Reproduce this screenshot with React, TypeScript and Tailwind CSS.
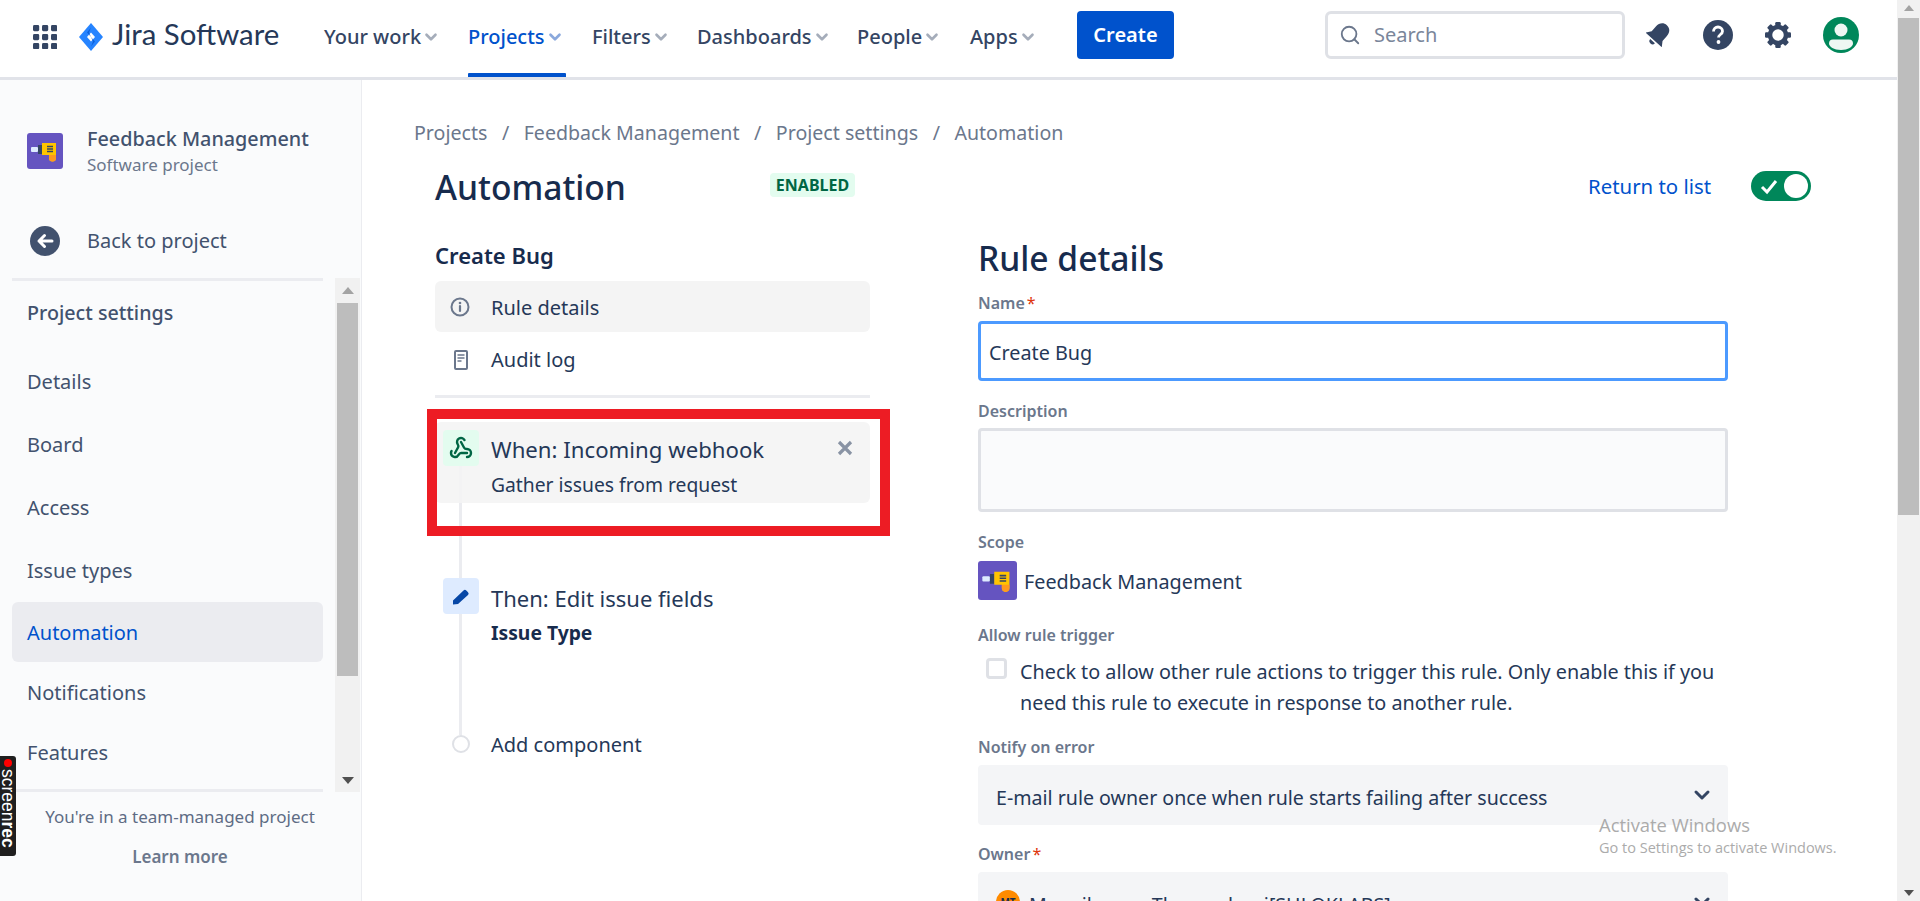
import React from 'react';
import { ChevronDown, Search, Webhook } from 'lucide-react';

const navItems = [
  { label: 'Your work', width: 'w-[144px]' },
  { label: 'Projects', width: 'w-[124px]', active: true },
  { label: 'Filters', width: 'w-[105px]' },
  { label: 'Dashboards', width: 'w-[160px]' },
  { label: 'People', width: 'w-[113px]' },
  { label: 'Apps', width: 'w-[107px]' },
];

const settingsLinks = ['Details', 'Board', 'Access', 'Issue types', 'Automation', 'Notifications', 'Features'];

const DrillIcon = ({ size }: { size: number }) => (
  <svg width={size} height={size} viewBox="0 0 36 36" className="shrink-0 rounded-[3px]">
    <rect width="36" height="36" fill="#6554c0" />
    <rect x="4" y="14" width="7" height="5" rx="1" fill="#deebff" />
    <rect x="11" y="12" width="4" height="9" fill="#344563" />
    <path d="M15 10h14v15a3.5 3.5 0 0 1-7 0v-3h-7z" fill="#ffc400" />
    <path d="M22 22h7v3a3.5 3.5 0 0 1-7 0z" fill="#ff991f" />
    <path d="M20 13.5h6M20 16h6M20 18.5h6" stroke="#344563" strokeWidth="1.4" />
  </svg>
);

const Field = ({ label, required, className, children }: { label: string; required?: boolean; className: string; children: React.ReactNode }) => (
  <div className={className}>
    <div className="h-[22px] text-[16px] leading-[22px] font-semibold text-[#6b778c]">
      {label}
      {required && <span className="ml-[2px] font-normal text-[#de350b]">*</span>}
    </div>
    {children}
  </div>
);

export default function App() {
  return (
    <div className="relative flex h-[901px] w-full overflow-hidden bg-white font-['Noto_Sans',sans-serif] text-[#172b4d]">
      <div className="flex min-w-0 flex-1 flex-col">
        {/* Top nav */}
        <header className="flex h-[80px] shrink-0 items-start border-b-[3px] border-[#e1e3e9] bg-white">
          <div className="flex h-[73px] items-center pl-[33px]">
            <svg width="24" height="24" viewBox="0 0 24 24" fill="#344563" className="mr-[21px]">
              {[0, 9, 18].map(y => [0, 9, 18].map(x => <rect key={`${x}-${y}`} x={x} y={y} width="6.2" height="6.2" rx="1.4" />))}
            </svg>
            <svg width="26" height="30" viewBox="0 0 26 30" className="mr-[8px]">
              <path d="M13 1 25 15 13 29 1 15z" fill="#2684ff" />
              <path d="M13 10.5 17 15l-4 4.5L9 15z" fill="#fff" />
              <path d="M13 5.5 9 10.5l4 4.5-2-4.5zM13 24.5l4-5-4-4.5 2 4.5z" fill="#0052cc" opacity="0.7" />
            </svg>
            <span className="-mt-[4px] w-[212px] font-['Lato',sans-serif] text-[29.400px] text-[#253858]">Jira Software</span>
          </div>
          <nav className="flex h-[77px]">
            {navItems.map(item => (
              <div key={item.label} className={`${item.width} relative flex h-full items-center pb-[4px] text-[20px] font-medium ${item.active ? 'text-[#0052cc]' : 'text-[#344563]'}`}>
                {item.label}
                <ChevronDown size={18} strokeWidth={3.5} className={`ml-[1px] ${item.active ? 'text-[#8aa8dc]' : 'text-[#a5adba]'}`} />
                {item.active && <div className="absolute bottom-0 left-0 h-[4px] w-[98px] rounded-t-[1px] bg-[#0052cc]" />}
              </div>
            ))}
          </nav>
          <button className="mt-[11px] h-[48px] w-[97px] rounded-[4px] bg-[#0052cc] text-[20px] font-semibold text-white">Create</button>
          <div className="ml-auto mt-[11px] flex h-[48px] w-[300px] items-center rounded-[6px] border-[3px] border-[#dfe1e6] pl-[11px]">
            <Search size={22} strokeWidth={2} className="text-[#6b778c]" />
            <span className="ml-[13px] text-[20px] text-[#7a869a]">Search</span>
          </div>
          <div className="flex h-[69px] items-center pl-[21px] pr-[38px]">
            <svg width="25" height="25" viewBox="0 0 24 24" fill="#344563" className="mr-[32px]">
              <g transform="rotate(42 12 12)">
                <path d="M12 0c4.500 0 7 3.500 7 8v6l3.500 5h-21L5 14V8c0-4.500 2.500-8 7-8z" />
                <path d="M9 20.500a3 3 0 0 0 6 0z" />
              </g>
            </svg>
            <svg width="30" height="30" viewBox="0 0 30 30" className="mr-[32px]">
              <circle cx="15" cy="15" r="15" fill="#344563" />
              <path d="M10.500 11.500c0-2.800 2-4.500 4.500-4.500s4.500 1.700 4.500 4.200c0 3.300-4 3.300-4 6.300" fill="none" stroke="#fff" strokeWidth="2.800" />
              <circle cx="15.500" cy="22" r="1.900" fill="#fff" />
            </svg>
            <svg width="26" height="26" viewBox="0 0 26 26" className="mr-[32px]">
              {[0, 45, 90, 135, 180, 225, 270, 315].map(a => (
                <rect key={a} x="10.250" y="0" width="5.500" height="6" rx="1.200" fill="#344563" transform={`rotate(${a} 13 13)`} />
              ))}
              <circle cx="13" cy="13" r="8" fill="none" stroke="#344563" strokeWidth="4.500" />
            </svg>
            <svg width="36" height="36" viewBox="0 0 36 36">
              <circle cx="18" cy="18" r="18" fill="#00875a" />
              <circle cx="18" cy="13" r="6.500" fill="#eef7f3" />
              <path d="M6 26.500a4 4 0 0 1 4-4h16a4 4 0 0 1 4 4c0 3-5 6.500-12 6.500S6 29.500 6 26.500z" fill="#eef7f3" />
            </svg>
          </div>
        </header>

        <div className="flex min-h-0 flex-1">
          {/* Project sidebar */}
          <aside className="flex w-[362px] shrink-0 flex-col border-r border-[#ebecf0] bg-[#fafbfc] text-[#42526e]">
            <div className="flex h-[198px] flex-col">
              <div className="flex items-center pl-[27px] pt-[45px]">
                <DrillIcon size={36} />
                <div className="ml-[24px]">
                  <div className="text-[19.800px] leading-[28px] font-medium text-[#42526e]">Feedback Management</div>
                  <div className="text-[17px] leading-[24px] text-[#6b778c]">Software project</div>
                </div>
              </div>
              <div className="mt-[48px] flex items-center pl-[30px]">
                <svg width="30" height="30" viewBox="0 0 30 30">
                  <circle cx="15" cy="15" r="15" fill="#42526e" />
                  <path d="M22 15H9M14.500 9.500 9 15l5.500 5.500" fill="none" stroke="#fff" strokeWidth="3" strokeLinecap="round" strokeLinejoin="round" />
                </svg>
                <span className="ml-[27px] pt-[1px] text-[20px]">Back to project</span>
              </div>
            </div>
            <div className="flex h-[514px] shrink-0">
              <div className="ml-[12px] flex w-[311px] flex-col border-y-[3px] border-[#ebecf0]">
                <div className="flex h-[62px] shrink-0 items-center pl-[15px] pt-[1px] text-[19.700px] font-medium">Project settings</div>
                <div className="mt-[6px] flex flex-col">
                  {settingsLinks.map((link, i) => (
                    <div
                      key={link}
                      className={`flex shrink-0 items-center pl-[15px] pt-[2px] text-[20px] ${i < 4 ? 'h-[63px]' : 'h-[60px]'} ${
                        link === 'Automation' ? 'mt-[1px] rounded-[6px] bg-[#ebecf0] text-[#0052cc]' : 'text-[#42526e]'
                      }`}
                    >
                      {link}
                    </div>
                  ))}
                </div>
              </div>
              <div className="ml-[12px] flex h-full w-[25px] flex-col items-center bg-[#f1f1f1]">
                <div className="mt-[9px] h-0 w-0 border-x-[6px] border-b-[7px] border-x-transparent border-b-[#a3a3a3]" />
                <div className="mt-[9px] h-[373px] w-[21px] bg-[#bdbdbd]" />
                <div className="mt-[101px] h-0 w-0 border-x-[6px] border-t-[7px] border-x-transparent border-t-[#505050]" />
              </div>
            </div>
            <div className="ml-[12px] w-[336px] pt-[11px] text-center text-[#5e6c84]">
              <div className="text-[17px] leading-[28px]">You're in a team-managed project</div>
              <div className="mt-[13px] text-[17px] leading-[26px] font-semibold text-[#6b778c]">Learn more</div>
            </div>
          </aside>

          {/* Rule editor */}
          <main className="relative min-w-0 flex-1 overflow-hidden">
            <div className="mt-[38px] flex h-[30px] items-center gap-[14.500px] pl-[52px] text-[19.600px] text-[#6b778c]">
              <span>Projects</span><span>/</span>
              <span>Feedback Management</span><span>/</span>
              <span>Project settings</span><span>/</span>
              <span>Automation</span>
            </div>
            <div className="mt-[13px] flex h-[54px] items-center pl-[73px]">
              <h1 className="-mt-[2px] w-[335px] text-[33.600px] font-medium leading-[54px]">Automation</h1>
              <span className="-mt-[6px] flex h-[24px] w-[85px] items-center justify-center rounded-[4px] bg-[#e3fcef] text-[16px] font-bold text-[#006644]">ENABLED</span>
              <a className="ml-[733px] -mt-[3px] text-[20.400px] text-[#0052cc]">Return to list</a>
              <div className="ml-[40px] -mt-[5px] flex h-[30px] w-[60px] items-center justify-between rounded-full bg-[#00875a] px-[3px]">
                <svg width="24" height="24" viewBox="0 0 24 24" fill="none" stroke="#fff" strokeWidth="3" className="ml-[3px]"><path d="M5 13l5 5 9-11" /></svg>
                <div className="h-[24px] w-[24px] rounded-full bg-white" />
              </div>
            </div>

            <div className="flex pl-[73px]">
              {/* Left rail */}
              <div className="w-[435px] shrink-0">
                <div className="mt-[24px] h-[33px] text-[22px] font-semibold leading-[33px]">Create Bug</div>
                <div className="mt-[9px] flex h-[51px] items-center rounded-[6px] bg-[#f4f4f4] pl-[15px] text-[20px]">
                  <svg width="20" height="20" viewBox="0 0 20 20" fill="none" className="shrink-0">
                    <circle cx="10" cy="10" r="8.500" stroke="#6b778c" strokeWidth="2" />
                    <path d="M10 9v5" stroke="#6b778c" strokeWidth="2.200" strokeLinecap="round" />
                    <circle cx="10" cy="6" r="1.300" fill="#6b778c" />
                  </svg>
                  <span className="ml-[21px] pt-[3px] text-[#253858]">Rule details</span>
                </div>
                <div className="mt-[3px] flex h-[50px] items-center pl-[19px] text-[20px]">
                  <svg width="14" height="20" viewBox="0 0 14 20" fill="none" className="shrink-0">
                    <rect x="1" y="1" width="12" height="18" rx="1" stroke="#6b778c" strokeWidth="2" />
                    <path d="M3.500 5h7M3.500 8h7M3.500 11h4" stroke="#6b778c" strokeWidth="1.500" />
                  </svg>
                  <span className="ml-[23px] text-[#253858]">Audit log</span>
                </div>
                <div className="mt-[10px] h-[3px] bg-[#ebecf0]" />

                <div className="relative mt-[24px]">
                  <div className="absolute left-[24px] top-[8px] h-[305px] w-[3px] bg-[#ebecf0]" />
                  <div className="relative flex h-[81px] rounded-[6px] bg-[#f4f4f4]/90 pl-[8px] pt-[8px]">
                    <div className="flex h-[36px] w-[36px] shrink-0 items-center justify-center rounded-[4px] bg-[#e3fcef]">
                      <Webhook size={24} strokeWidth={2.4} className="text-[#006644]" />
                    </div>
                    <div className="ml-[12px]">
                      <div className="pt-[3px] text-[22.200px] leading-[34px] text-[#253858]">When: Incoming webhook</div>
                      <div className="pt-[4px] text-[19.300px] leading-[27px] text-[#253858]">Gather issues from request</div>
                    </div>
                    <svg width="16" height="16" viewBox="0 0 16 16" stroke="#8993a4" strokeWidth="3.200" className="ml-auto mr-[17px] mt-[10px]">
                      <path d="M2 2l12 12M14 2 2 14" />
                    </svg>
                  </div>
                  <div className="relative mt-[75px] flex h-[151px] pl-[8px]">
                    <div className="flex h-[36px] w-[36px] shrink-0 items-center justify-center rounded-[4px] bg-[#deebff]">
                      <svg width="18" height="18" viewBox="0 0 18 18" fill="#0747a6">
                        <path d="M1 13.500 11.500 3.500a2 2 0 0 1 2.800 0l1.700 1.700a2 2 0 0 1 0 2.800L6 17l-5 0.500z" />
                      </svg>
                    </div>
                    <div className="ml-[12px]">
                      <div className="pt-[3px] text-[22px] leading-[34px] text-[#253858]">Then: Edit issue fields</div>
                      <div className="pt-[4px] text-[19.300px] leading-[27px] font-bold">Issue Type</div>
                    </div>
                  </div>
                  <div className="relative flex h-[30px] items-center pl-[17px]">
                    <div className="h-[18px] w-[18px] rounded-full border-2 border-[#dfe1e6] bg-white" />
                    <span className="ml-[21px] pt-[2px] text-[20px] text-[#253858]">Add component</span>
                  </div>
                </div>
              </div>

              {/* Form */}
              <div className="ml-[108px] w-[750px] shrink-0">
                <h2 className="mt-[18px] h-[50px] text-[33.600px] font-medium leading-[50px]">Rule details</h2>
                <Field label="Name" required className="mt-[9px]">
                  <div className="mt-[7px] flex h-[60px] items-center rounded-[4px] border-[3px] border-[#4c9aff] pl-[8px] pt-[4px] text-[19.800px] text-[#253858]">Create Bug</div>
                </Field>
                <Field label="Description" className="mt-[19px]">
                  <div className="mt-[6px] h-[84px] rounded-[4px] border-[3px] border-[#dfe1e6] bg-[#fafbfc]" />
                </Field>
                <Field label="Scope" className="mt-[19px]">
                  <div className="mt-[8px] flex items-center">
                    <DrillIcon size={39} />
                    <span className="ml-[7px] pt-[3px] text-[19.800px] text-[#253858]">Feedback Management</span>
                  </div>
                </Field>
                <Field label="Allow rule trigger" className="mt-[24px]">
                  <div className="mt-[8px] flex pl-[8px]">
                    <div className="mt-[4px] h-[21px] w-[21px] shrink-0 rounded-[4px] border-[3px] border-[#dfe1e6]" />
                    <p className="ml-[13px] pt-[2px] text-[19.800px] leading-[31px] text-[#253858]">
                      Check to allow other rule actions to trigger this rule. Only enable this if you need this rule to execute in response to another rule.
                    </p>
                  </div>
                </Field>
                <Field label="Notify on error" className="mt-[18px]">
                  <div className="mt-[7px] flex h-[60px] items-center justify-between rounded-[4px] bg-[#f4f5f7] pl-[18px] pr-[14px] text-[19.600px] text-[#253858]">
                    <span className="mt-[5px]">E-mail rule owner once when rule starts failing after success</span>
                    <ChevronDown size={24} strokeWidth={3} className="text-[#344563]" />
                  </div>
                </Field>
                <Field label="Owner" required className="mt-[18px]">
                  <div className="mt-[7px] flex h-[60px] items-center rounded-[4px] bg-[#f4f5f7] pl-[18px] pr-[14px] text-[19.600px] text-[#253858]">
                    <div className="flex h-[24px] w-[24px] items-center justify-center rounded-full bg-[#ff8b00] text-[10px] font-bold text-[#172b4d]">MT</div>
                    <span className="ml-[9px] mt-[5px]">Manojkumar Thangadurai[SHLOKLABS]</span>
                    <ChevronDown size={24} strokeWidth={3} className="ml-auto text-[#344563]" />
                  </div>
                </Field>
              </div>
            </div>
          </main>
        </div>
      </div>

      {/* Page scrollbar */}
      <div className="flex h-full w-[23px] shrink-0 flex-col items-center bg-[#f1f1f1]">
        <div className="mt-[5px] h-0 w-0 border-x-[5px] border-b-[6px] border-x-transparent border-b-[#a3a3a3]" />
        <div className="mt-[7px] h-[497px] w-[21px] bg-[#bdbdbd]" />
        <div className="mt-auto mb-[5px] h-0 w-0 border-x-[5px] border-t-[6px] border-x-transparent border-t-[#505050]" />
      </div>

      {/* Annotation over the trigger card */}
      <div className="pointer-events-none absolute left-[427px] top-[409px] h-[127px] w-[463px] border-[10px] border-[#ed1c24]" />

      {/* Screen recorder badge */}
      <div className="absolute left-0 top-[756px] flex h-[100px] w-[16px] flex-col items-center overflow-hidden rounded-r-[3px] bg-[#1f1f1f] font-['Liberation_Sans',sans-serif]">
        <div className="mt-[3px] h-[8px] w-[8px] shrink-0 rounded-full bg-[#ff0000]" />
        <div className="mt-[2px] text-[17.500px] leading-[16px] text-white [writing-mode:vertical-rl]">
          screen<b>rec</b>
        </div>
      </div>

      {/* Windows watermark */}
      <div className="pointer-events-none absolute left-[1599px] top-[813px] font-['Open_Sans',sans-serif] text-[#ababab]">
        <div className="text-[18.400px] leading-[24px]">Activate Windows</div>
        <div className="text-[14.500px] leading-[22px]">Go to Settings to activate Windows.</div>
      </div>
    </div>
  );
}
